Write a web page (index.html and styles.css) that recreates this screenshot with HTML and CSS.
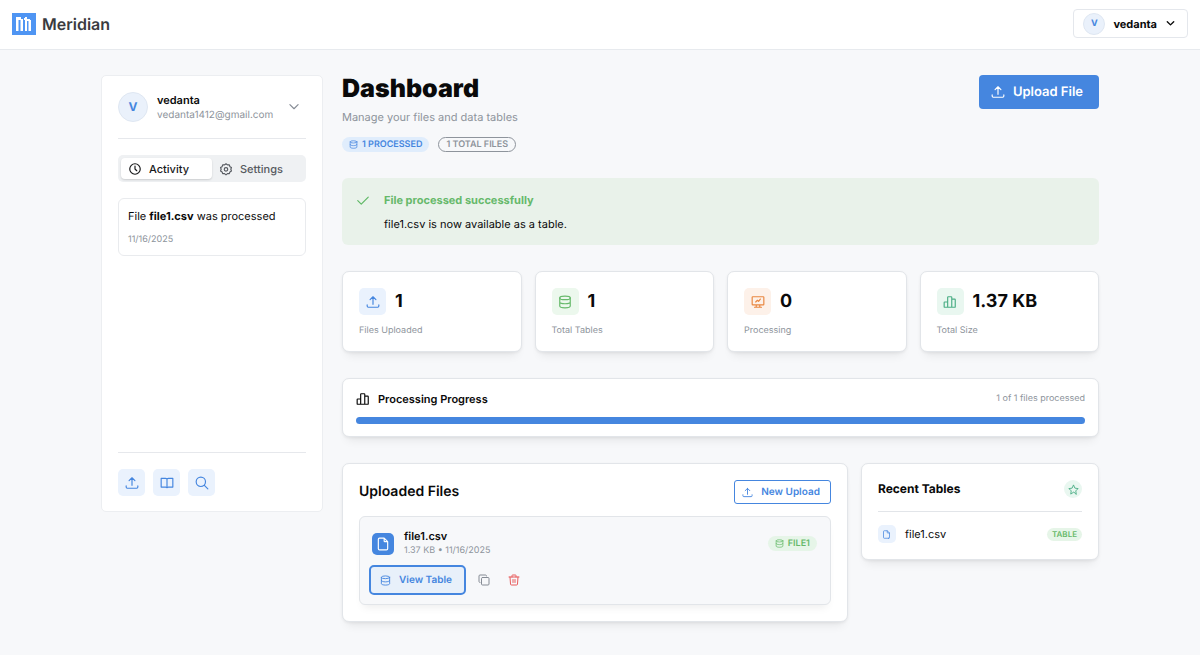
FILE: index.html
```html
<!DOCTYPE html>
<html lang="en">
<head>
    <meta charset="UTF-8">
    <meta name="viewport" content="width=device-width, initial-scale=1.0">
    <title>Meridian - Dashboard</title>
    <link rel="stylesheet" href="styles.css">
</head>
<body>
    <!-- Shared icons -->
    <svg class="icon-defs" aria-hidden="true">
        <symbol id="icon-upload" viewBox="0 0 24 24"><path d="M2 17v2a2 2 0 0 0 2 2h16a2 2 0 0 0 2 -2v-2M7 8l5 -5l5 5M12 3v13"/></symbol>
        <symbol id="icon-database" viewBox="0 0 24 24"><ellipse cx="12" cy="5" rx="9" ry="3"/><path d="M3 5v14c0 1.700 4 3 9 3s9 -1.300 9 -3v-14M3 12c0 1.700 4 3 9 3s9 -1.300 9 -3"/></symbol>
        <symbol id="icon-chart" viewBox="0 0 24 24"><path d="M8 12h-5a1 1 0 0 0 -1 1v7a1 1 0 0 0 1 1h5M15 21h-7v-17a1 1 0 0 1 1 -1h5a1 1 0 0 1 1 1zM15 7h5a1 1 0 0 1 1 1v12a1 1 0 0 1 -1 1h-5"/></symbol>
        <symbol id="icon-chevron" viewBox="0 0 24 24"><path d="M5 8l7 7l7 -7"/></symbol>
        <symbol id="icon-file" viewBox="0 0 24 24"><path d="M14 2v5a1 1 0 0 0 1 1h5M18 22h-12a2 2 0 0 1 -2 -2v-16a2 2 0 0 1 2 -2h8l6 6v12a2 2 0 0 1 -2 2z"/></symbol>
        <symbol id="icon-clock" viewBox="0 0 24 24"><circle cx="12" cy="12" r="9"/><path d="M12 7v5l3 3"/></symbol>
        <symbol id="icon-settings" viewBox="0 0 24 24"><path d="M12 3l2.500 2l3.200 0l1 3l2.600 1.600l-1 2.900l1 2.900l-2.600 1.600l-1 3l-3.200 0l-2.500 2l-2.500 -2l-3.200 0l-1 -3l-2.600 -1.600l1 -2.900l-1 -2.900l2.600 -1.600l1 -3l3.200 0z"/><circle cx="12" cy="12.500" r="3"/></symbol>
        <symbol id="icon-book" viewBox="0 0 24 24"><path d="M12 5a4 4 0 0 0 -3 -1h-7v15h7a4 4 0 0 1 3 1a4 4 0 0 1 3 -1h7v-15h-7a4 4 0 0 0 -3 1v15"/></symbol>
        <symbol id="icon-search" viewBox="0 0 24 24"><circle cx="10" cy="10" r="8"/><path d="M16 16l6 6"/></symbol>
        <symbol id="icon-check" viewBox="0 0 24 24"><path d="M3 13l6 6l12 -12"/></symbol>
        <symbol id="icon-monitor" viewBox="0 0 24 24"><path d="M3 3h18a1 1 0 0 1 1 1v12a1 1 0 0 1 -1 1h-18a1 1 0 0 1 -1 -1v-12a1 1 0 0 1 1 -1zM6 21h12M9 17v4M15 17v4M8 12l3 -3l2 2l3 -4"/></symbol>
        <symbol id="icon-copy" viewBox="0 0 24 24"><rect x="7" y="7" width="15" height="15" rx="2"/><path d="M4 17a2 2 0 0 1 -2 -2v-11a2 2 0 0 1 2 -2h11a2 2 0 0 1 2 2"/></symbol>
        <symbol id="icon-trash" viewBox="0 0 24 24"><path d="M2 6h20M10 11v6M14 11v6M4 6l1 14a2 2 0 0 0 2 2h10a2 2 0 0 0 2 -2l1 -14M8 6v-3a1 1 0 0 1 1 -1h6a1 1 0 0 1 1 1v3"/></symbol>
        <symbol id="icon-star" viewBox="0 0 24 24"><path d="M12 18l-6 4l1 -7l-5 -5l7 -1l3 -7l3 7l7 1l-5 5l1 7z"/></symbol>
    </svg>

    <header class="header">
        <a class="brand" href="#">
            <svg class="logo" viewBox="0 0 24 22" aria-hidden="true">
                <rect class="logo-bg" width="24" height="22"/>
                <path class="logo-mark" d="M4 18V4h5v2h2v12H8.500V7H6.500v11zM13 18V7h-1V5h1V4h2v2h3v1h1v11h-2.500V8H15v10z"/>
            </svg>
            <span>Meridian</span>
        </a>
        <button class="user-btn" type="button">
            <span class="avatar avatar-sm">V</span>
            <span>vedanta</span>
            <svg class="icon icon-bold icon-sm"><use href="#icon-chevron"/></svg>
        </button>
    </header>

    <div class="container">
        <aside class="sidebar">
            <div class="profile">
                <span class="avatar">V</span>
                <div class="profile-text">
                    <div class="profile-name">vedanta</div>
                    <div class="profile-email">vedanta1412@gmail.com</div>
                </div>
                <button class="icon-btn" type="button" aria-label="Profile menu"><svg class="icon"><use href="#icon-chevron"/></svg></button>
            </div>

            <div class="tabs">
                <button class="tab tab-active" type="button"><svg class="icon"><use href="#icon-clock"/></svg>Activity</button>
                <button class="tab" type="button"><svg class="icon"><use href="#icon-settings"/></svg>Settings</button>
            </div>

            <div class="activity">
                <div class="activity-text">File <b>file1.csv</b> was processed</div>
                <div class="activity-date">11/16/2025</div>
            </div>

            <div class="quick-actions">
                <button class="tile blue" type="button" aria-label="Upload"><svg class="icon"><use href="#icon-upload"/></svg></button>
                <button class="tile blue" type="button" aria-label="Docs"><svg class="icon"><use href="#icon-book"/></svg></button>
                <button class="tile blue" type="button" aria-label="Search"><svg class="icon"><use href="#icon-search"/></svg></button>
            </div>
        </aside>

        <main class="main">
            <div class="page-head">
                <div>
                    <h1>Dashboard</h1>
                    <p class="subtitle">Manage your files and data tables</p>
                    <div class="badges">
                        <span class="badge badge-blue"><svg class="icon icon-xs"><use href="#icon-database"/></svg>1 PROCESSED</span>
                        <span class="badge badge-outline">1 TOTAL FILES</span>
                    </div>
                </div>
                <button class="upload-btn" type="button"><svg class="icon"><use href="#icon-upload"/></svg>Upload File</button>
            </div>

            <div class="alert">
                <svg class="icon"><use href="#icon-check"/></svg>
                <div>
                    <div class="alert-title">File processed successfully</div>
                    <div class="alert-text">file1.csv is now available as a table.</div>
                </div>
            </div>

            <div class="stats">
                <div class="card stat">
                    <div class="stat-top"><span class="tile blue"><svg class="icon"><use href="#icon-upload"/></svg></span><span class="stat-value">1</span></div>
                    <div class="stat-label">Files Uploaded</div>
                </div>
                <div class="card stat">
                    <div class="stat-top"><span class="tile green"><svg class="icon"><use href="#icon-database"/></svg></span><span class="stat-value">1</span></div>
                    <div class="stat-label">Total Tables</div>
                </div>
                <div class="card stat">
                    <div class="stat-top"><span class="tile orange"><svg class="icon"><use href="#icon-monitor"/></svg></span><span class="stat-value">0</span></div>
                    <div class="stat-label">Processing</div>
                </div>
                <div class="card stat">
                    <div class="stat-top"><span class="tile teal"><svg class="icon"><use href="#icon-chart"/></svg></span><span class="stat-value">1.37 KB</span></div>
                    <div class="stat-label">Total Size</div>
                </div>
            </div>

            <section class="card progress-card">
                <div class="progress-head">
                    <svg class="icon"><use href="#icon-chart"/></svg>
                    <h2 class="progress-title">Processing Progress</h2>
                    <span class="progress-count">1 of 1 files processed</span>
                </div>
                <div class="progress" role="progressbar" aria-valuenow="100" aria-valuemin="0" aria-valuemax="100" aria-label="Processing progress">
                    <div class="progress-bar" style="width: 100%"></div>
                </div>
            </section>

            <div class="columns">
                <section class="card files">
                    <div class="files-head">
                        <h2>Uploaded Files</h2>
                        <button class="new-btn" type="button"><svg class="icon icon-sm"><use href="#icon-upload"/></svg>New Upload</button>
                    </div>
                    <div class="file">
                        <div class="file-info">
                            <span class="file-icon"><svg class="icon"><use href="#icon-file"/></svg></span>
                            <div class="file-text">
                                <div class="file-name">file1.csv</div>
                                <div class="file-meta">1.37 KB • 11/16/2025</div>
                            </div>
                            <span class="badge badge-green"><svg class="icon icon-xs"><use href="#icon-database"/></svg>FILE1</span>
                        </div>
                        <div class="file-actions">
                            <button class="view-btn" type="button"><svg class="icon icon-sm"><use href="#icon-database"/></svg>View Table</button>
                            <button class="icon-btn" type="button" aria-label="Copy"><svg class="icon icon-md"><use href="#icon-copy"/></svg></button>
                            <button class="icon-btn icon-btn-red" type="button" aria-label="Delete"><svg class="icon icon-md"><use href="#icon-trash"/></svg></button>
                        </div>
                    </div>
                </section>

                <section class="card recent">
                    <div class="recent-head">
                        <h2>Recent Tables</h2>
                        <span class="tile tile-sm tile-round teal"><svg class="icon icon-sm"><use href="#icon-star"/></svg></span>
                    </div>
                    <div class="recent-row">
                        <span class="tile tile-sm blue"><svg class="icon icon-xs"><use href="#icon-file"/></svg></span>
                        <span class="recent-name">file1.csv</span>
                        <span class="badge badge-green badge-sm">TABLE</span>
                    </div>
                </section>
            </div>
        </main>
    </div>
</body>
</html>
```
FILE: styles.css
```css
* {
    box-sizing: border-box;
}

body {
    margin: 0;
    background-color: #f7f8fa;
    color: #0a0a0a;
    font-family: Inter, "Liberation Sans", sans-serif;
    font-size: 11px;
    line-height: 16px;
    text-rendering: geometricPrecision;
}

h1, h2, p {
    margin: 0;
}

button {
    font-family: inherit;
    color: inherit;
    cursor: pointer;
    text-rendering: inherit;
}

/* Icons */
.icon-defs {
    display: none;
}

.icon {
    width: 14px;
    height: 14px;
    flex: none;
    fill: none;
    stroke: currentColor;
    stroke-width: 2;
    stroke-linecap: round;
    stroke-linejoin: round;
}

.icon-bold {
    stroke-width: 3;
}

.icon-md {
    width: 12px;
    height: 12px;
}

.icon-sm {
    width: 11px;
    height: 11px;
}

.icon-xs {
    width: 9px;
    height: 9px;
}

/* Header */
.header {
    display: flex;
    justify-content: space-between;
    align-items: center;
    height: 50px;
    padding: 0 12px 2px;
    background-color: white;
    border-bottom: 1px solid #e7eaee;
}

.brand {
    display: flex;
    align-items: center;
    gap: 6px;
    color: #3a3b3e;
    font-size: 16px;
    font-weight: 600;
    text-decoration: none;
}

.logo {
    width: 24px;
    height: 22px;
}

.logo-bg {
    fill: #4f95f3;
}

.logo-mark {
    fill: white;
}

.user-btn {
    display: flex;
    align-items: center;
    gap: 8px;
    height: 29px;
    padding: 0 11px 0 9px;
    background-color: white;
    border: 1px solid #e4e7ec;
    border-radius: 4px;
    font-size: 11px;
    font-weight: 700;
}

.avatar {
    display: flex;
    align-items: center;
    justify-content: center;
    flex: none;
    width: 30px;
    height: 30px;
    background-color: #eaf1fb;
    border: 1px solid #dfe7f2;
    border-radius: 50%;
    color: #4586df;
    font-size: 12px;
    font-weight: 700;
}

.avatar-sm {
    width: 22px;
    height: 22px;
    font-size: 9px;
}

/* Page */
.container {
    display: flex;
    align-items: flex-start;
    gap: 19px;
    max-width: 998px;
    margin: 0 auto;
    padding: 25px 0 33px;
}

.main {
    flex: 1;
    min-width: 0;
    display: flex;
    flex-direction: column;
    gap: 26px;
}

.card {
    background-color: white;
    border: 1px solid #e2e5e9;
    border-radius: 7px;
    box-shadow: 0 1px 3px rgba(0, 0, 0, 0.06), 0 8px 10px -5px rgba(0, 0, 0, 0.08);
}

.tile {
    display: flex;
    align-items: center;
    justify-content: center;
    flex: none;
    width: 27px;
    height: 27px;
    padding: 0;
    border: none;
    border-radius: 5px;
}

.tile-sm {
    width: 18px;
    height: 18px;
}

.tile-round {
    border-radius: 50%;
}

.blue {
    background-color: #eaf2fd;
    color: #4586df;
}

.green {
    background-color: #ecf8ed;
    color: #66b96a;
}

.orange {
    background-color: #fdf1e9;
    color: #e98740;
}

.teal {
    background-color: #e9f7f0;
    color: #4bae85;
}

/* Sidebar */
.sidebar {
    display: flex;
    flex-direction: column;
    width: 222px;
    min-height: 437px;
    padding: 16px 16px 15px;
    background-color: white;
    border: 1px solid #eceef1;
    border-radius: 5px;
}

.profile {
    display: flex;
    align-items: center;
    gap: 9px;
    padding-bottom: 16px;
    border-bottom: 1px solid #e6e8ec;
}

.profile-text {
    flex: 1;
}

.profile-name {
    font-weight: 600;
}

.profile-email {
    color: #8e949c;
    font-size: 10px;
    line-height: 14px;
}

.icon-btn {
    display: flex;
    align-items: center;
    justify-content: center;
    width: 24px;
    height: 24px;
    padding: 0;
    background: none;
    border: none;
    color: #868c95;
}

.icon-btn-red {
    color: #e85b5b;
}

.tabs {
    display: flex;
    margin: 16px 0;
    padding: 3px;
    background-color: #eff1f3;
    border-radius: 5px;
}

.tab {
    display: flex;
    flex: 1;
    align-items: center;
    gap: 7px;
    height: 21px;
    padding: 0 7px;
    background: none;
    border: none;
    border-radius: 4px;
    color: #565a60;
    font-size: 11px;
    font-weight: 500;
}

.tab-active {
    background-color: white;
    box-shadow: 0 1px 2px rgba(0, 0, 0, 0.15);
    color: #17181a;
}

.activity {
    padding: 9px 9px 7px;
    border: 1px solid #e9ebee;
    border-radius: 6px;
}

.activity-text {
    margin-bottom: 8px;
}

.activity-date {
    color: #8e949c;
    font-size: 9px;
}

.quick-actions {
    display: flex;
    gap: 8px;
    margin-top: auto;
    padding-top: 16px;
    border-top: 1px solid #e6e8ec;
}

/* Page head */
.page-head {
    display: flex;
    justify-content: space-between;
    align-items: flex-start;
}

h1 {
    font-size: 25px;
    font-weight: 900;
    line-height: 28px;
}

.subtitle {
    margin: 6px 0 12px;
    color: #8e949c;
}

.badges {
    display: flex;
    gap: 9px;
}

.badge {
    display: flex;
    align-items: center;
    gap: 4px;
    height: 15px;
    padding: 0 7px;
    border-radius: 8px;
    font-size: 9px;
    font-weight: 600;
}

.badge-blue {
    background-color: #e0edfc;
    color: #4586df;
}

.badge-outline {
    border: 1px solid #8e949c;
    color: #8e949c;
}

.badge-green {
    background-color: #e6f5e8;
    color: #66b96a;
}

.badge-sm {
    height: 13px;
    padding: 0 5px;
    font-size: 8px;
}

.upload-btn {
    display: flex;
    align-items: center;
    gap: 8px;
    height: 34px;
    padding: 0 16px 0 12px;
    background-color: #4586df;
    border: none;
    border-radius: 4px;
    color: white;
    font-size: 13px;
    font-weight: 600;
}

.alert {
    display: flex;
    gap: 14px;
    padding: 14px 14px 13px;
    background-color: #e9f2ea;
    border-radius: 6px;
}

.alert .icon {
    margin-top: 1px;
    color: #5fb865;
}

.alert-title {
    margin-bottom: 8px;
    color: #66b96a;
    font-weight: 700;
}

/* Stats */
.stats {
    display: grid;
    grid-template-columns: repeat(4, 1fr);
    gap: 13px;
}

.stat {
    padding: 16px 16px 12px;
}

.stat-top {
    display: flex;
    align-items: center;
    gap: 9px;
    margin-bottom: 8px;
}

.stat-value {
    font-size: 18px;
    font-weight: 700;
}

.stat-label {
    color: #8e949c;
    font-size: 9px;
}

/* Progress */
.progress-card {
    padding: 12px 13px;
}

.progress-head {
    display: flex;
    align-items: center;
    gap: 8px;
    margin-bottom: 10px;
}

.progress-title {
    flex: 1;
    font-size: 11px;
    font-weight: 600;
}

.progress-count {
    color: #8e949c;
    font-size: 9px;
}

.progress {
    height: 7px;
    background-color: #e9ecef;
    border-radius: 4px;
    overflow: hidden;
}

.progress-bar {
    height: 100%;
    background-color: #4586df;
}

/* Files and recent tables */
.columns {
    display: grid;
    grid-template-columns: 17fr 8fr;
    align-items: start;
    gap: 13px;
}

.files, .recent {
    padding: 16px;
}

.files-head {
    display: flex;
    justify-content: space-between;
    align-items: center;
    margin-bottom: 12px;
}

.files-head h2 {
    font-size: 14px;
    font-weight: 600;
}

.new-btn, .view-btn {
    display: flex;
    align-items: center;
    gap: 8px;
    height: 24px;
    padding: 0 10px 0 7px;
    background-color: white;
    border: 1px solid #4586df;
    border-radius: 3px;
    color: #4586df;
    font-size: 10px;
    font-weight: 600;
}

.file {
    padding: 12px 13px 9px 9px;
    background-color: #f7f8fa;
    border: 1px solid #e2e5e9;
    border-radius: 6px;
    box-shadow: 0 6px 8px -4px rgba(0, 0, 0, 0.08);
}

.file-info {
    display: flex;
    align-items: center;
    gap: 10px;
    padding-left: 3px;
}

.file-text {
    flex: 1;
}

.file-icon {
    display: flex;
    align-items: center;
    justify-content: center;
    width: 22px;
    height: 22px;
    background-color: #4586df;
    border-radius: 5px;
    color: white;
}

.file-name {
    font-weight: 600;
    line-height: 15px;
}

.file-meta {
    color: #8e949c;
    font-size: 9px;
    line-height: 14px;
}

.file-actions {
    display: flex;
    align-items: center;
    gap: 6px;
    margin-top: 7px;
}

.view-btn {
    height: 30px;
    padding: 0 12px 0 9px;
    background-color: #e8f0fa;
    border-width: 2px;
    border-radius: 5px;
}

.recent-head {
    display: flex;
    justify-content: space-between;
    align-items: center;
    padding-bottom: 13px;
    border-bottom: 1px solid #e2e5e9;
}

.recent-head h2 {
    font-size: 12px;
    font-weight: 700;
}

.recent-row {
    display: flex;
    align-items: center;
    gap: 9px;
    padding-top: 13px;
}

.recent-name {
    flex: 1;
}
```
